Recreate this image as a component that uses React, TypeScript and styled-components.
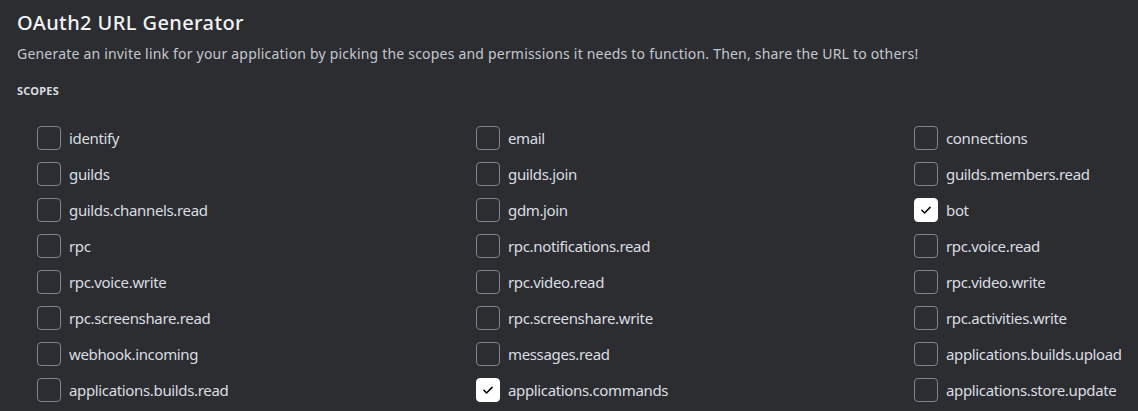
import styled, { createGlobalStyle } from "styled-components";

const GlobalStyle = createGlobalStyle`
  html, body {
    margin: 0;
    padding: 0;
    background: #2b2d31;
    overflow: hidden;
  }
`;

const scopes: { name: string; checked?: boolean }[] = [
  { name: "identify" },
  { name: "email" },
  { name: "connections" },
  { name: "guilds" },
  { name: "guilds.join" },
  { name: "guilds.members.read" },
  { name: "guilds.channels.read" },
  { name: "gdm.join" },
  { name: "bot", checked: true },
  { name: "rpc" },
  { name: "rpc.notifications.read" },
  { name: "rpc.voice.read" },
  { name: "rpc.voice.write" },
  { name: "rpc.video.read" },
  { name: "rpc.video.write" },
  { name: "rpc.screenshare.read" },
  { name: "rpc.screenshare.write" },
  { name: "rpc.activities.write" },
  { name: "webhook.incoming" },
  { name: "messages.read" },
  { name: "applications.builds.upload" },
  { name: "applications.builds.read" },
  { name: "applications.commands", checked: true },
  { name: "applications.store.update" },
];

const App = () => {
  return (
    <>
      <GlobalStyle />
      <Page>
        <Title>OAuth2 URL Generator</Title>
        <Description>
          Generate an invite link for your application by picking the scopes and permissions it
          needs to function. Then, share the URL to others!
        </Description>
        <SectionLabel>Scopes</SectionLabel>
        <ScopeGrid>
          {scopes.map((s) => (
            <ScopeRow key={s.name}>
              <Box $checked={!!s.checked}>
                {s.checked && (
                  <svg width="14" height="14" viewBox="0 0 24 24">
                    <path
                      d="M5 12.5l4.5 4.5L19 7.5"
                      fill="none"
                      stroke="#000"
                      strokeWidth="2.6"
                      strokeLinecap="round"
                      strokeLinejoin="round"
                    />
                  </svg>
                )}
              </Box>
              <ScopeName>{s.name}</ScopeName>
            </ScopeRow>
          ))}
        </ScopeGrid>
      </Page>
    </>
  );
};

const Page = styled.main`
  padding: 10px 0 0 17px;
  font-family: "Noto Sans", "Open Sans", sans-serif;
  overflow: hidden;
`;

const Title = styled.h1`
  margin: 0;
  font-size: 20px;
  line-height: 26px;
  font-weight: 500;
  letter-spacing: 0.4px;
  color: #f2f3f5;
`;

const Description = styled.p`
  margin: 8px 0 0;
  font-size: 14px;
  line-height: 20px;
  letter-spacing: 0.2px;
  color: #c4c8ce;
  white-space: nowrap;
`;

const SectionLabel = styled.h2`
  margin: 19px 0 0;
  font-size: 11px;
  line-height: 16px;
  font-weight: 700;
  text-transform: uppercase;
  letter-spacing: 0.02em;
  color: #dbdee1;
`;

const ScopeGrid = styled.div`
  display: grid;
  grid-template-columns: 439px 438px 1fr;
  grid-auto-rows: 36px;
  margin-top: 21px;
  padding-left: 20px;
`;

const ScopeRow = styled.label`
  display: flex;
  align-items: center;
  gap: 8px;
  cursor: pointer;
  white-space: nowrap;
`;

const Box = styled.span<{ $checked: boolean }>`
  width: 24px;
  height: 24px;
  box-sizing: border-box;
  border-radius: 4px;
  border: 1px solid ${(p) => (p.$checked ? "#ffffff" : "#80848e")};
  background: ${(p) => (p.$checked ? "#ffffff" : "transparent")};
  display: flex;
  align-items: center;
  justify-content: center;
  flex-shrink: 0;
`;

const ScopeName = styled.span`
  font-size: 15px;
  line-height: 20px;
  letter-spacing: -0.35px;
  color: #dbdee1;
`;

export default App;
